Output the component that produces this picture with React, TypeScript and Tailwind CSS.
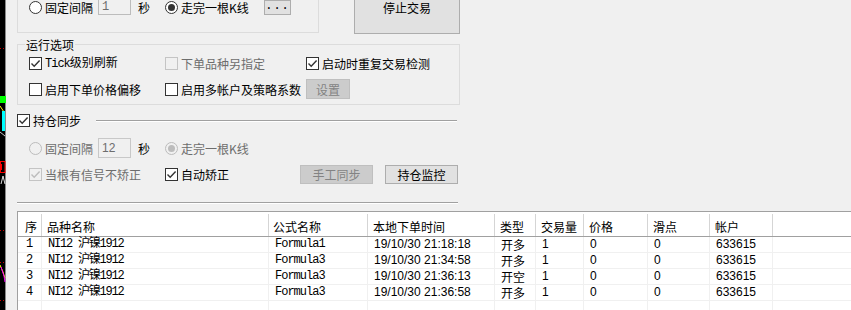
import React from "react";

type Opt = { checked?: boolean; disabled?: boolean };

function Radio({ checked, disabled }: Opt) {
  return (
    <span
      className={`w-[13px] h-[13px] rounded-full border flex items-center justify-center shrink-0 ${
        disabled ? "border-[#bcbcbc] bg-[#f0f0f0]" : "border-[#333333] bg-white"
      }`}
    >
      {checked && (
        <span className={`w-[7px] h-[7px] rounded-full ${disabled ? "bg-[#bcbcbc]" : "bg-[#333333]"}`} />
      )}
    </span>
  );
}

function Check({ checked, disabled }: Opt) {
  return (
    <span
      className={`w-[13px] h-[13px] border flex items-center justify-center shrink-0 ${
        disabled ? "border-[#c4c4c4] bg-[#f0f0f0]" : "border-[#333333] bg-white"
      }`}
    >
      {checked && (
        <svg width="11" height="11" viewBox="0 0 11 11">
          <path d="M1.5 5.5 L4.2 8.2 L9.6 2.6" fill="none" stroke={disabled ? "#bcbcbc" : "#333333"} strokeWidth="1.4" />
        </svg>
      )}
    </span>
  );
}

function Label({ children, disabled }: { children: React.ReactNode; disabled?: boolean }) {
  return <span className={`whitespace-nowrap ${disabled ? "text-[#6d6d6d]" : "text-black"}`}>{children}</span>;
}

function Btn({ children, disabled, className = "" }: { children: React.ReactNode; disabled?: boolean; className?: string }) {
  return (
    <div
      className={`flex items-center justify-center border ${
        disabled ? "bg-[#cccccc] border-[#bfbfbf] text-[#838383]" : "bg-[#e1e1e1] border-[#adadad] text-black"
      } ${className}`}
    >
      {children}
    </div>
  );
}

function ChartStrip() {
  return (
    <svg width="6" height="310" className="block shrink-0">
      <rect width="5" height="310" fill="#000" />
      <rect x="5" width="1" height="310" fill="#8a8a8a" />
      {[48, 230, 262, 300].map((y) => (
        <g key={y}>
          <rect x="0" y={y} width="1" height="1" fill="#d00000" />
          <rect x="3" y={y} width="1" height="1" fill="#d00000" />
        </g>
      ))}
      <rect x="0" y="96" width="6" height="7" fill="#00ff00" />
      <path d="M0 106 L4 112" stroke="#ffff00" strokeWidth="1" />
      <rect x="2" y="111" width="3" height="20" fill="#00ffff" />
      <path d="M0 132 L5 136" stroke="#c8c8c8" strokeWidth="1" />
      <rect x="0.5" y="161.5" width="4.5" height="11" fill="none" stroke="#ff0000" />
      <rect x="1" y="164" width="1" height="6" fill="#ff0000" />
      <path d="M1 184 L3 176 L5 184" fill="none" stroke="#e0e0e0" strokeWidth="1" />
      <path d="M0 265 L3 272 L5 278" fill="none" stroke="#ffff00" strokeWidth="1" />
      <path d="M1 267 L4 276 L5 282" fill="none" stroke="#ff00ff" strokeWidth="1" />
    </svg>
  );
}

const cols = [
  { title: "序", w: "w-[24px]", pl: "pl-[7px]" },
  { title: "品种名称", w: "w-[227px]", pl: "pl-[5px]" },
  { title: "公式名称", w: "w-[99px]", pl: "pl-[4px]" },
  { title: "本地下单时间", w: "w-[127px]", pl: "pl-[5px]" },
  { title: "类型", w: "w-[41px]", pl: "pl-[5px]" },
  { title: "交易量", w: "w-[48px]", pl: "pl-[5px]" },
  { title: "价格", w: "w-[64px]", pl: "pl-[5px]" },
  { title: "滑点", w: "w-[62px]", pl: "pl-[5px]" },
  { title: "帐户", w: "w-[63px]", pl: "pl-[5px]" },
];

const fonts = [
  "font-['Liberation_Mono','Noto_Sans_CJK_SC',monospace] tracking-[-1.2px]",
  "font-['Liberation_Mono','Noto_Sans_CJK_SC',monospace] tracking-[-1.2px]",
  "font-['Liberation_Mono',monospace] tracking-[-1px]",
  "font-['Liberation_Sans',sans-serif]",
  "font-['Noto_Sans_CJK_SC',sans-serif]",
  "font-['Liberation_Sans',sans-serif]",
  "font-['Liberation_Sans',sans-serif]",
  "font-['Liberation_Sans',sans-serif]",
  "font-['Liberation_Sans',sans-serif]",
];

const rows = [
  ["1", "NI12 沪镍1912", "Formula1", "19/10/30 21:18:18", "开多", "1", "0", "0", "633615"],
  ["2", "NI12 沪镍1912", "Formula3", "19/10/30 21:34:58", "开多", "1", "0", "0", "633615"],
  ["3", "NI12 沪镍1912", "Formula3", "19/10/30 21:36:13", "开空", "1", "0", "0", "633615"],
  ["4", "NI12 沪镍1912", "Formula3", "19/10/30 21:36:58", "开多", "1", "0", "0", "633615"],
  ["", "", "", "", "", "", "", "", ""],
];

export default function App() {
  return (
    <div className="w-[851px] h-[310px] overflow-hidden bg-[#f0f0f0] flex text-[12px] leading-[13px] text-black font-['Noto_Sans_CJK_SC',sans-serif]">
      <ChartStrip />
      <div className="flex-1 flex flex-col pl-[11px] min-w-0">
        {/* top strategy row (cut at the top) */}
        <div className="flex items-start h-[34px] shrink-0">
          <div className="w-[302px] h-[33px] border-x border-b border-[#dcdcdc] pl-[11px] pr-[27px]">
            <div className="flex items-center h-[14px]">
              <Radio />
              <span className="w-[56px] pl-[3px]">
                <Label>固定间隔</Label>
              </span>
              <div className="w-[33px] h-[16px] border border-[#bcbcbc] bg-[#f0f0f0] text-[#6d6d6d] pl-[3px] flex items-center font-['Liberation_Mono',monospace]">
                1
              </div>
              <span className="w-[34px] pl-[7px]">秒</span>
              <Radio checked />
              <span className="pl-[3px]">
                <Label>走完一根K线</Label>
              </span>
              <Btn className="ml-auto w-[27px] h-[15px] font-['Liberation_Mono',monospace] tracking-[1px] pb-[1px]">...</Btn>
            </div>
          </div>
          <div className="ml-[35px] w-[106px] h-[34px] bg-[#e1e1e1] border-x border-b border-[#adadad] flex justify-center pt-[1px]">
            停止交易
          </div>
        </div>

        {/* 运行选项 */}
        <div className="relative mt-[10px] w-[443px] h-[61px] shrink-0 border border-[#dcdcdc] pt-[5px] pl-[11px]">
          <span className="absolute -top-[7px] left-[7px] px-[1px] bg-[#f0f0f0]">运行选项</span>
          <div className="flex items-center h-[26px]">
            <label className="w-[136px] flex items-center gap-[3px]">
              <Check checked />
              <Label>
                <span className="font-['Liberation_Mono',monospace] tracking-[-1px]">Tick</span>级别刷新
              </Label>
            </label>
            <label className="w-[141px] flex items-center gap-[3px]">
              <Check disabled />
              <Label disabled>下单品种另指定</Label>
            </label>
            <label className="flex items-center gap-[3px]">
              <Check checked />
              <Label>启动时重复交易检测</Label>
            </label>
          </div>
          <div className="flex items-center h-[26px]">
            <label className="w-[136px] flex items-center gap-[3px]">
              <Check />
              <Label>启用下单价格偏移</Label>
            </label>
            <label className="w-[141px] flex items-center gap-[3px]">
              <Check />
              <Label>启用多帐户及策略系数</Label>
            </label>
            <Btn disabled className="w-[44px] h-[20px]">
              设置
            </Btn>
          </div>
        </div>

        {/* 持仓同步 */}
        <div className="flex items-center h-[13px] mt-[9px] shrink-0">
          <label className="flex items-center gap-[3px] w-[79px]">
            <Check checked />
            <Label>持仓同步</Label>
          </label>
          <div className="w-[361px] h-[2px] border-t border-b border-t-[#a0a0a0] border-b-white" />
        </div>
        <div className="flex items-center h-[20px] mt-[11px] pl-[12px] shrink-0">
          <Radio disabled />
          <span className="w-[56px] pl-[3px]">
            <Label disabled>固定间隔</Label>
          </span>
          <div className="w-[33px] h-[20px] border border-[#c8c8c8] bg-[#f0f0f0] text-[#6d6d6d] pl-[3px] flex items-center font-['Liberation_Sans',sans-serif]">
            12
          </div>
          <span className="w-[34px] pl-[7px]">秒</span>
          <Radio checked disabled />
          <span className="pl-[3px]">
            <Label disabled>走完一根K线</Label>
          </span>
        </div>
        <div className="flex items-center h-[19px] mt-[7px] pl-[12px] shrink-0">
          <label className="w-[136px] flex items-center gap-[3px]">
            <Check checked disabled />
            <Label disabled>当根有信号不矫正</Label>
          </label>
          <label className="w-[135px] flex items-center gap-[3px]">
            <Check checked />
            <Label>自动矫正</Label>
          </label>
          <Btn disabled className="w-[73px] h-[19px]">
            手工同步
          </Btn>
          <Btn className="ml-[12px] w-[73px] h-[19px]">持仓监控</Btn>
        </div>
        <div className="w-[441px] h-[2px] mt-[18px] shrink-0 border-t border-b border-t-[#a0a0a0] border-b-white" />

        {/* order table */}
        <div className="mt-[7px] flex-1 border-t border-l border-[#a0a0a0] bg-white">
          <div className="flex h-[25px] border-b border-[#a0a0a0]">
            {cols.map((c) => (
              <div key={c.title} className={`${c.w} ${c.pl} shrink-0 flex items-center pt-[3px] border-r border-[#d5d5d5] mt-[2px]`}>
                {c.title}
              </div>
            ))}
          </div>
          {rows.map((r, i) => (
            <div key={i} className="flex h-[16px] border-b border-[#f0f0f0]">
              {r.map((v, j) => (
                <div
                  key={j}
                  className={`${cols[j].w} ${j === 0 ? "pl-[8px]" : "pl-[6px]"} ${fonts[j]} shrink-0 flex items-center whitespace-nowrap border-r border-[#f0f0f0]`}
                >
                  {v}
                </div>
              ))}
            </div>
          ))}
        </div>
      </div>
    </div>
  );
}
